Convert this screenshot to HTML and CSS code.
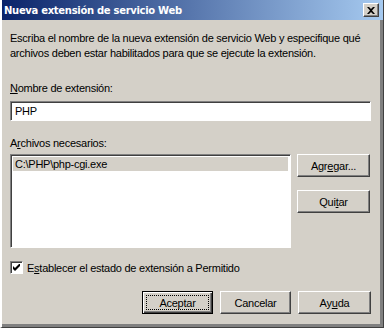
FILE: index.html
```html
<!DOCTYPE html>
<html lang="es">
<head>
    <meta charset="UTF-8">
    <title>Nueva extensión de servicio Web</title>
    <link rel="stylesheet" href="styles.css">
</head>
<body>
    <div class="window">
        <div class="titlebar">
            <span class="title">Nueva extensión de servicio Web</span>
            <button class="close-btn">
                <svg width="8" height="7" viewBox="0 0 8 7">
                    <path d="M0 0h2l2 2 2-2h2L5 3.5 8 7H6L4 5 2 7H0l3-3.5z" fill="#000"/>
                </svg>
            </button>
        </div>
        <div class="content">
            <p class="intro">Escriba el nombre de la nueva extensión de servicio Web y especifique qué archivos deben estar habilitados para que se ejecute la extensión.</p>

            <label class="field-label"><u>N</u>ombre de extensión:</label>
            <div class="textbox">PHP</div>

            <label class="field-label files-label">A<u>r</u>chivos necesarios:</label>
            <div class="files-row">
                <div class="listbox">
                    <div class="list-item">C:\PHP\php-cgi.exe</div>
                </div>
                <div class="side-buttons">
                    <button class="btn">Agr<u>e</u>gar...</button>
                    <button class="btn">Qui<u>t</u>ar</button>
                </div>
            </div>

            <div class="check-row">
                <span class="checkbox">
                    <svg width="7" height="7" viewBox="0 0 7 7">
                        <path d="M0 2v3l2 2 5-5V-1L2 4z" fill="#000"/>
                    </svg>
                </span>
                <span>E<u>s</u>tablecer el estado de extensión a Permitido</span>
            </div>

            <div class="actions">
                <button class="btn default"><span class="focus">Aceptar</span></button>
                <button class="btn">Cancelar</button>
                <button class="btn">Ay<u>u</u>da</button>
            </div>
        </div>
    </div>
</body>
</html>
```

FILE: styles.css
```css
* {
    box-sizing: border-box;
    margin: 0;
    padding: 0;
}

body {
    background-color: #d4d0c8;
    font-family: "Liberation Sans", Arial, sans-serif;
    font-size: 11px;
    letter-spacing: -0.25px;
    color: #000;
}

.window {
    width: 384px;
    height: 328px;
    display: flex;
    flex-direction: column;
    background-color: #d4d0c8;
    border-left: 2px solid #fff;
    border-right: 1px solid #404040;
    border-bottom: 1px solid #404040;
    box-shadow: inset -3px -3px 0 #808080;
}

.titlebar {
    height: 20px;
    display: flex;
    align-items: center;
    justify-content: space-between;
    padding: 0 4px 0 2px;
    background: linear-gradient(to right, #0a246a, #a6caf0);
}

.title {
    color: #fff;
    font-family: "DejaVu Sans", Verdana, sans-serif;
    font-weight: bold;
    font-size: 10px;
    letter-spacing: -0.3px;
}

.close-btn {
    width: 16px;
    height: 14px;
    display: flex;
    align-items: center;
    justify-content: center;
    background-color: #d4d0c8;
    border: 1px solid;
    border-color: #fff #404040 #404040 #fff;
    box-shadow: inset -1px -1px 0 #808080;
}

.content {
    padding: 11px 12px 0 8px;
    display: flex;
    flex-direction: column;
}

.intro {
    line-height: 15px;
    margin-bottom: 21px;
}

.field-label {
    display: block;
    line-height: 13px;
    margin-bottom: 6px;
}

.files-label {
    margin-top: 16px;
    margin-bottom: 4px;
}

.textbox {
    height: 20px;
    padding: 3px 4px;
    background-color: #fff;
    border: 1px solid;
    border-color: #808080 #fff #fff #808080;
    box-shadow: inset 1px 1px 0 #404040;
}

.files-row {
    display: flex;
    gap: 6px;
}

.listbox {
    width: 281px;
    height: 94px;
    padding: 2px;
    background-color: #fff;
    border: 1px solid;
    border-color: #808080 #fff #fff #808080;
    box-shadow: inset 1px 1px 0 #404040;
}

.list-item {
    height: 14px;
    line-height: 14px;
    padding-left: 2px;
    background-color: #d4d0c8;
}

.side-buttons {
    display: flex;
    flex-direction: column;
    gap: 13px;
}

.btn {
    width: 73px;
    height: 23px;
    font-family: inherit;
    font-size: 11px;
    letter-spacing: inherit;
    color: #000;
    background-color: #d4d0c8;
    border: 1px solid;
    border-color: #fff #404040 #404040 #fff;
    box-shadow: inset -1px -1px 0 #808080;
}

.check-row {
    display: flex;
    align-items: center;
    gap: 4px;
    margin-top: 13px;
}

.checkbox {
    width: 13px;
    height: 13px;
    display: flex;
    align-items: center;
    justify-content: center;
    background-color: #fff;
    border: 1px solid;
    border-color: #808080 #fff #fff #808080;
    box-shadow: inset 1px 1px 0 #404040;
}

.actions {
    display: flex;
    justify-content: flex-end;
    gap: 7px;
    margin-top: 17px;
}

.actions .btn:nth-child(2) {
    width: 71px;
}

.btn.default {
    width: 71px;
    border: 1px solid #000;
    box-shadow: inset 1px 1px 0 #fff, inset -1px -1px 0 #404040, inset -2px -2px 0 #808080;
    padding: 3px;
}

.focus {
    display: flex;
    align-items: center;
    justify-content: center;
    height: 100%;
    border: 1px dotted #000;
}
```
